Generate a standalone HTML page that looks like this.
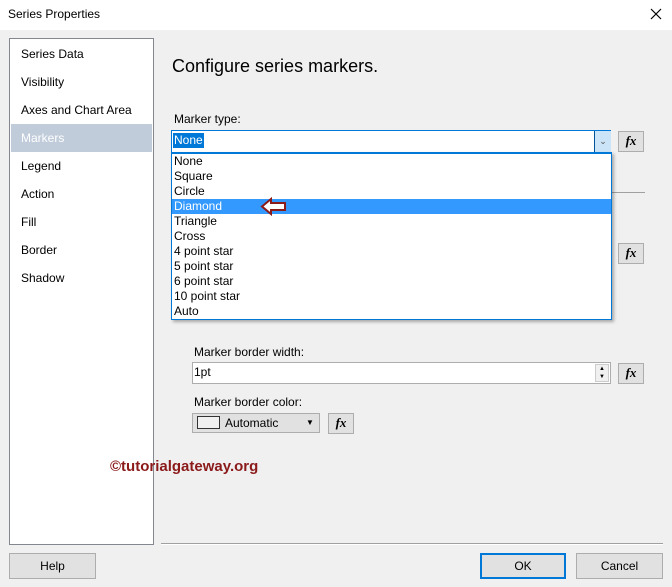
<!DOCTYPE html>
<html><head><style>
*{margin:0;padding:0;box-sizing:border-box}
body{width:672px;height:587px;background:#f0f0f0;font-family:"Segoe UI","Liberation Sans",sans-serif;font-size:12px;color:#000;position:relative;overflow:hidden}
.a{position:absolute}
.fx{position:absolute;width:26px;height:21px;border:1px solid #adadad;background:#e1e1e1;font:italic bold 13px "Liberation Serif",serif;text-align:center;line-height:18px}
.btn{position:absolute;height:26px;border:1px solid #adadad;background:#e1e1e1;text-align:center;line-height:24px;font-size:12px}
.nav div{height:28px;line-height:28px;padding-left:11px}
.lst div{height:15px;line-height:15px;padding-left:2px}
</style></head><body>
<div class="a" style="left:0;top:0;width:672px;height:30px;background:#fff"></div>
<div class="a" style="left:8px;top:7px">Series Properties</div>
<svg class="a" style="left:650px;top:8px" width="12" height="12"><path d="M1 1L11 11M11 1L1 11" stroke="#000" stroke-width="1.2"/></svg>
<div class="a nav" style="left:9px;top:38px;width:145px;height:507px;background:#fff;border:1px solid #828790;padding-top:1px">
<div>Series Data</div><div>Visibility</div><div>Axes and Chart Area</div>
<div style="background:#c1ccdb;color:#fff;margin:0 1px;padding-left:10px">Markers</div>
<div>Legend</div><div>Action</div><div>Fill</div><div>Border</div><div>Shadow</div></div>
<div class="a" style="left:172px;top:56px;font-size:18px">Configure series markers.</div>
<div class="a" style="left:174px;top:112px">Marker type:</div>
<div class="a" style="left:171px;top:130px;width:440px;height:23px;background:#fff;border:1px solid #0078d7"></div>
<div class="a" style="left:173px;top:133px;background:#0078d7;color:#fff;line-height:15px;padding:0 1px">None</div>
<div class="a" style="left:594px;top:131px;width:17px;height:21px;background:#cce4f7;border-left:1px solid #005499;text-align:center;line-height:20px;font-size:9px;color:#555">&#8964;</div>
<div class="a" style="left:611px;top:192px;width:34px;height:1px;background:#a0a0a0"></div>
<div class="a lst" style="left:171px;top:152px;width:441px;height:168px;background:#fff;border:1px solid #0078d7;border-top:2px solid #0078d7;box-shadow:2px 2px 3px rgba(0,0,0,.3)">
<div>None</div><div>Square</div><div>Circle</div><div style="background:#3399ff;color:#fff">Diamond</div><div>Triangle</div><div>Cross</div><div>4 point star</div><div>5 point star</div><div>6 point star</div><div>10 point star</div><div>Auto</div></div>
<svg class="a" style="left:260px;top:197px" width="28" height="19"><path d="M2 9.5 L11 2 V6 H25 V13 H11 V17 Z" fill="#fff" stroke="#8b1a1a" stroke-width="2"/></svg>
<div class="fx" style="left:618px;top:131px">fx</div>
<div class="fx" style="left:618px;top:243px">fx</div>
<div class="a" style="left:194px;top:345px">Marker border width:</div>
<div class="a" style="left:192px;top:362px;width:419px;height:22px;background:#fff;border:1px solid #adadad;padding-left:1px;line-height:19px">1pt</div>
<div class="a" style="left:595px;top:364px;width:14px;height:18px;border:1px solid #ccc;background:#f0f0f0;font-size:6px;line-height:8px;text-align:center">▲<br>▼</div>
<div class="fx" style="left:618px;top:363px">fx</div>
<div class="a" style="left:194px;top:395px">Marker border color:</div>
<div class="a" style="left:192px;top:413px;width:128px;height:20px;border:1px solid #adadad;background:#e1e1e1"></div>
<div class="a" style="left:197px;top:416px;width:23px;height:13px;border:1px solid #333;background:#f0f0f0"></div>
<div class="a" style="left:225px;top:416px">Automatic</div>
<div class="a" style="left:306px;top:418px;font-size:8px">▼</div>
<div class="fx" style="left:328px;top:413px">fx</div>
<div class="a" style="left:110px;top:458px;color:#8b1a1a;font-weight:bold;font-size:15px">©tutorialgateway.org</div>
<div class="a" style="left:161px;top:543px;width:502px;height:1px;background:#a0a0a0"></div>
<div class="a" style="left:161px;top:544px;width:502px;height:1px;background:#fff"></div>
<div class="btn" style="left:9px;top:553px;width:87px">Help</div>
<div class="btn" style="left:480px;top:553px;width:86px;border:2px solid #0078d7;line-height:22px">OK</div>
<div class="btn" style="left:576px;top:553px;width:87px">Cancel</div>
</body></html>
